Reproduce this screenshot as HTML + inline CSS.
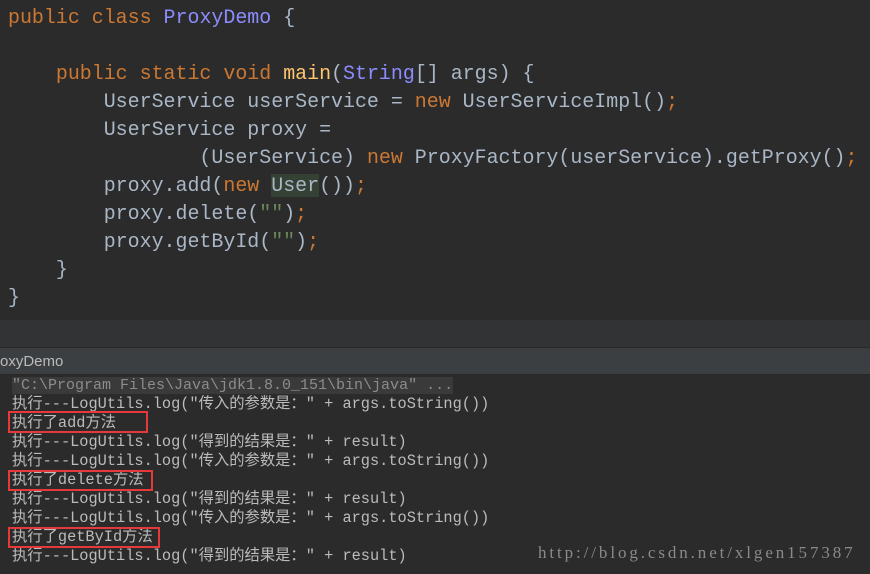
<!DOCTYPE html>
<html><head><meta charset="utf-8"><style>
body{margin:0;width:870px;height:574px;background:#2b2b2b;overflow:hidden;position:relative}
.code{position:absolute;left:8px;top:4px;font:19.95px/28px "Liberation Mono",monospace;color:#a9b7c6;white-space:pre}
.k{color:#cc7832}.c{color:#8c8cff}.m{color:#ffc66d}.s{color:#6a8759}.h{background:#344134}
.band{position:absolute;left:0;top:320px;width:870px;height:27px;background:#313335}
.hdr{position:absolute;left:0;top:347px;width:870px;height:28px;background:#3c3f41;border-top:1px solid #282828;border-bottom:1px solid #282828;box-sizing:border-box;color:#bbbbbb;font:15px/27px "Liberation Sans",sans-serif}
.con{position:absolute;left:12px;top:376px;font:15.3px/19px "Liberation Mono","Noto Sans CJK SC",monospace;color:#bbbbbb;white-space:pre}
.g{color:#8c8c8c;background:#3a3a3a;font-size:15px}
.box{position:absolute;border:2px solid #e8393a;box-sizing:border-box}
.wm{position:absolute;left:538px;top:543px;font:17px/20px "Liberation Serif",serif;letter-spacing:2.9px;color:#8a8a8a;white-space:nowrap}
</style></head><body>
<div class="code"><span class="k">public class </span><span class="c">ProxyDemo</span> {

    <span class="k">public static void </span><span class="m">main</span>(<span class="c">String</span>[] args) {
        UserService userService = <span class="k">new </span>UserServiceImpl()<span class="k">;</span>
        UserService proxy =
                (UserService) <span class="k">new </span>ProxyFactory(userService).getProxy()<span class="k">;</span>
        proxy.add(<span class="k">new </span><span class="h">User</span>())<span class="k">;</span>
        proxy.delete(<span class="s">""</span>)<span class="k">;</span>
        proxy.getById(<span class="s">""</span>)<span class="k">;</span>
    }
}</div>
<div class="band"></div>
<div class="hdr">oxyDemo</div>
<div class="con"><span class="g">"C:\Program Files\Java\jdk1.8.0_151\bin\java" ...</span>
执行---LogUtils.log("传入的参数是：" + args.toString())
执行了add方法
执行---LogUtils.log("得到的结果是：" + result)
执行---LogUtils.log("传入的参数是：" + args.toString())
执行了delete方法
执行---LogUtils.log("得到的结果是：" + result)
执行---LogUtils.log("传入的参数是：" + args.toString())
执行了getById方法
执行---LogUtils.log("得到的结果是：" + result)</div>
<div class="box" style="left:8px;top:411px;width:140px;height:22px"></div>
<div class="box" style="left:8px;top:470px;width:145px;height:21px"></div>
<div class="box" style="left:8px;top:527px;width:152px;height:21px"></div>
<div class="wm">http://blog.csdn.net/xlgen157387</div>
</body></html>
